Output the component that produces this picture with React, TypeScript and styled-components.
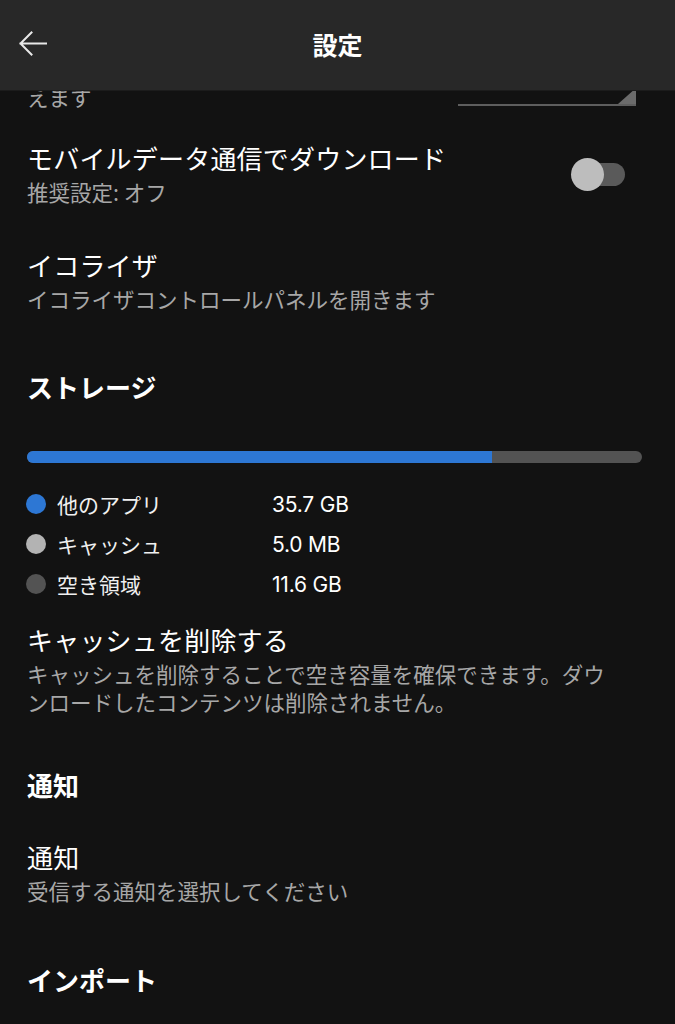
import React from "react";
import styled, { createGlobalStyle } from "styled-components";

const Global = createGlobalStyle`
  html, body { margin: 0; padding: 0; background: #121212; }
  body { font-family: "Noto Sans CJK JP", "Noto Sans", sans-serif; color: #fff; }
  * { box-sizing: border-box; }
`;

const Page = styled.div`
  width: 675px;
  height: 1024px;
  overflow: hidden;
  background: #121212;
  position: relative;
`;

const Header = styled.header`
  position: fixed;
  top: 0;
  left: 0;
  width: 675px;
  height: 91px;
  background: #282828;
  border-bottom: 1px solid #1c1c1c;
  display: flex;
  align-items: center;
  justify-content: center;
  z-index: 10;
`;

const BackButton = styled.button`
  position: absolute;
  left: 18px;
  top: 31px;
  width: 30px;
  height: 26px;
  padding: 0;
  border: none;
  background: transparent;
  display: flex;
  align-items: center;
  justify-content: center;
`;

const HeaderTitle = styled.h1`
  margin: 0;
  font-size: 25px;
  font-weight: 700;
  line-height: 32px;
  color: #fff;
  margin-top: -2px;
`;

const Content = styled.main`
  padding: 76px 33px 0 27px;
  display: flex;
  flex-direction: column;
`;

const Row = styled.div<{ $mt?: number }>`
  display: flex;
  align-items: center;
  justify-content: space-between;
  margin-top: ${(p) => p.$mt ?? 0}px;
`;

const TopRow = styled.div`
  display: flex;
  align-items: flex-end;
  justify-content: space-between;
`;

const TextCol = styled.div<{ $max?: number }>`
  display: flex;
  flex-direction: column;
  gap: 4px;
  max-width: ${(p) => (p.$max ? `${p.$max}px` : "none")};
`;

const Title = styled.div`
  font-size: 26px;
  line-height: 32px;
  font-weight: 400;
  color: #fff;
  letter-spacing: 0.2px;
`;

const Sub = styled.div`
  font-size: 21.5px;
  line-height: 28px;
  color: #a7a7a7;
`;

const SectionTitle = styled.h2<{ $mt: number }>`
  margin: ${(p) => p.$mt}px 0 0;
  font-size: 26px;
  line-height: 32px;
  font-weight: 700;
  color: #fff;
`;

const Dropdown = styled.div`
  position: relative;
  width: 178px;
  height: 30px;
  margin-right: 6px;
  margin-bottom: 5px;
  border-bottom: 2px solid #5e5e5e;
`;

const DropTriangle = styled.div`
  position: absolute;
  right: 0;
  bottom: 0;
  width: 0;
  height: 0;
  border-left: 18px solid transparent;
  border-bottom: 16px solid #6b6b6b;
`;

const Toggle = styled.div`
  position: relative;
  width: 50px;
  height: 23px;
  border-radius: 12px;
  background: #5a5a5a;
  margin-right: 17px;
`;

const Thumb = styled.div`
  position: absolute;
  left: -4px;
  top: -5px;
  width: 33px;
  height: 33px;
  border-radius: 50%;
  background: #bdbdbd;
`;

const Bar = styled.div`
  margin-top: 48px;
  height: 12px;
  border-radius: 6px;
  background: #535353;
  overflow: hidden;
  display: flex;
`;

const BarFill = styled.div`
  height: 100%;
  background: #2d77d4;
`;

const Legend = styled.div`
  margin-top: 21px;
  display: flex;
  flex-direction: column;
`;

const LegendRow = styled.div`
  display: grid;
  grid-template-columns: 20px 216px auto;
  column-gap: 10px;
  align-items: center;
  height: 40px;
`;

const Dot = styled.span<{ $c: string }>`
  width: 20px;
  height: 20px;
  border-radius: 50%;
  background: ${(p) => p.$c};
  margin-left: -1px;
`;

const LegendLabel = styled.span`
  font-size: 21px;
  color: #f0f0f0;
`;

const LegendValue = styled.span`
  font-family: Inter, "Noto Sans", sans-serif;
  font-size: 21px;
  color: #fff;
  margin-left: -11px;
  letter-spacing: -0.2px;
`;

const legend = [
  { c: "#2d77d4", label: "他のアプリ", value: "35.7 GB" },
  { c: "#b3b3b3", label: "キャッシュ", value: "5.0 MB" },
  { c: "#535353", label: "空き領域", value: "11.6 GB" },
];

export default function App() {
  return (
    <Page>
      <Global />
      <Header>
        <BackButton aria-label="戻る">
          <svg width="30" height="26" viewBox="0 0 30 26" fill="none">
            <path
              d="M28 12.5 H2.5 M13.5 1.5 L2.5 12.5 L13.5 23.5"
              stroke="#e8e8e8"
              strokeWidth="2"
              strokeLinecap="square"
            />
          </svg>
        </BackButton>
        <HeaderTitle>設定</HeaderTitle>
      </Header>
      <Content>
        <TopRow>
          <Sub>えます</Sub>
          <Dropdown>
            <DropTriangle />
          </Dropdown>
        </TopRow>

        <Row $mt={31}>
          <TextCol>
            <Title>モバイルデータ通信でダウンロード</Title>
            <Sub>推奨設定: オフ</Sub>
          </TextCol>
          <Toggle>
            <Thumb />
          </Toggle>
        </Row>

        <Row $mt={43}>
          <TextCol>
            <Title>イコライザ</Title>
            <Sub>イコライザコントロールパネルを開きます</Sub>
          </TextCol>
        </Row>

        <SectionTitle $mt={58}>ストレージ</SectionTitle>

        <Bar>
          <BarFill style={{ width: `${(465 / 615) * 100}%` }} />
        </Bar>

        <Legend>
          {legend.map((l) => (
            <LegendRow key={l.label}>
              <Dot $c={l.c} />
              <LegendLabel>{l.label}</LegendLabel>
              <LegendValue>{l.value}</LegendValue>
            </LegendRow>
          ))}
        </Legend>

        <Row $mt={20}>
          <TextCol $max={592}>
            <Title>キャッシュを削除する</Title>
            <Sub>
              キャッシュを削除することで空き容量を確保できます。ダウンロードしたコンテンツは削除されません。
            </Sub>
          </TextCol>
        </Row>

        <SectionTitle $mt={53}>通知</SectionTitle>

        <Row $mt={40}>
          <TextCol>
            <Title>通知</Title>
            <Sub>受信する通知を選択してください</Sub>
          </TextCol>
        </Row>

        <SectionTitle $mt={59}>インポート</SectionTitle>
      </Content>
    </Page>
  );
}
